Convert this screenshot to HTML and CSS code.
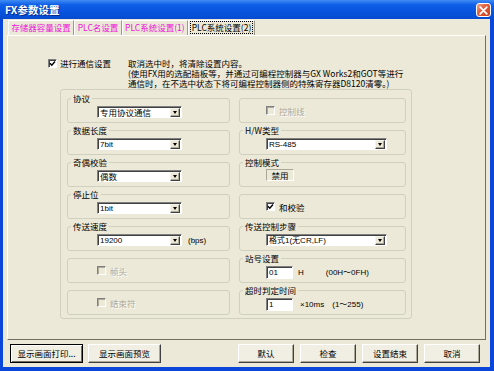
FILE: index.html
```html
<!DOCTYPE html>
<html lang="zh">
<head>
<meta charset="utf-8">
<title>FX参数设置</title>
<link rel="stylesheet" href="styles.css">
</head>
<body>
<div class="window">
  <div class="titlebar">
    <span class="title">FX参数设置</span>
    <span class="close"><svg width="9" height="9" viewBox="0 0 9 9"><path d="M1.2 1.2L7.8 7.8M7.8 1.2L1.2 7.8" stroke="#fff" stroke-width="1.7" stroke-linecap="round"/></svg></span>
  </div>
  <div class="frame">
    <div class="tabs">
      <div class="tab t1">存储器容量设置</div>
      <div class="tab t2">PLC名设置</div>
      <div class="tab t3">PLC系统设置(1)</div>
      <div class="tab t4 sel"><span class="focus">PLC系统设置(2)</span></div>
    </div>
    <div class="page">
      <div class="head">
        <div class="mainchk"><span class="cb"><svg viewBox="0 0 7 7"><path d="M1 3.3L2.8 5.2L6 1.5" fill="none" stroke="#000" stroke-width="1.4"/></svg></span><span>进行通信设置</span></div>
        <div class="desc"><div class="dl">取消选中时，将清除设置内容。</div><div class="dl">(使用FX用的选配插板等，并通过可编程控制器与GX Works2和GOT等进行</div><div class="dl">通信时，在不选中状态下将可编程控制器侧的特殊寄存器D8120清零。)</div></div>
      </div>
      <div class="group">
        <div class="grid">
          <div class="box"><span class="lbl">协议</span><div class="ctl"><div class="combo w85"><span class="cv cjk">专用协议通信</span><span class="arrow"></span></div></div></div>
          <div class="box plain r"><div class="ctl"><span class="cb dis"></span><span class="dtext">控制线</span></div></div>

          <div class="box"><span class="lbl">数据长度</span><div class="ctl"><div class="combo w85"><span class="cv">7bit</span><span class="arrow"></span></div></div></div>
          <div class="box r"><span class="lbl">H/W类型</span><div class="ctl"><div class="combo w121"><span class="cv">RS-485</span><span class="arrow"></span></div></div></div>

          <div class="box"><span class="lbl">奇偶校验</span><div class="ctl"><div class="combo w85"><span class="cv cjk">偶数</span><span class="arrow"></span></div></div></div>
          <div class="box r"><span class="lbl">控制模式</span><div class="ctl"><span class="static">禁用</span></div></div>

          <div class="box"><span class="lbl">停止位</span><div class="ctl"><div class="combo w85"><span class="cv">1bit</span><span class="arrow"></span></div></div></div>
          <div class="box plain r"><div class="ctl"><span class="cb"><svg viewBox="0 0 7 7"><path d="M1 3.3L2.8 5.2L6 1.5" fill="none" stroke="#000" stroke-width="1.4"/></svg></span><span>和校验</span></div></div>

          <div class="box"><span class="lbl">传送速度</span><div class="ctl"><div class="combo w85"><span class="cv">19200</span><span class="arrow"></span></div><span class="unit bps">(bps)</span></div></div>
          <div class="box r"><span class="lbl">传送控制步骤</span><div class="ctl"><div class="combo w121"><span class="cv">格式1(无CR,LF)</span><span class="arrow"></span></div></div></div>

          <div class="box plain"><div class="ctl"><span class="cb dis"></span><span class="dtext">帧头</span></div></div>
          <div class="box r"><span class="lbl">站号设置</span><div class="ctl"><span class="edit">01</span><span class="unit h">H</span><span class="unit range1">(00H～0FH)</span></div></div>

          <div class="box plain"><div class="ctl"><span class="cb dis"></span><span class="dtext">结束符</span></div></div>
          <div class="box r"><span class="lbl">超时判定时间</span><div class="ctl"><span class="edit">1</span><span class="unit ms">×10ms</span><span class="unit range2">(1～255)</span></div></div>
        </div>
      </div>
    </div>
    <div class="btns">
      <div class="btn wide focused">显示画面打印...</div>
      <div class="btn wide">显示画面预览</div>
      <div class="right">
        <div class="btn sm">默认</div>
        <div class="btn sm">检查</div>
        <div class="btn sm">设置结束</div>
        <div class="btn sm">取消</div>
      </div>
    </div>
  </div>
</div>
</body>
</html>
```
FILE: styles.css
```css
* { box-sizing: border-box; }
html, body { margin: 0; padding: 0; }
body {
  width: 494px;
  height: 371px;
  overflow: hidden;
  font-family: "Noto Sans CJK SC", "Liberation Sans", sans-serif;
  font-size: 8.5px;
  line-height: 10px;
  color: #000;
  background: #ECE9D8;
}
.window {
  width: 494px;
  height: 371px;
  display: flex;
  flex-direction: column;
}
.titlebar {
  height: 19px;
  flex: none;
  display: flex;
  align-items: center;
  justify-content: space-between;
  padding: 0 3px 0 5px;
  background: linear-gradient(#3F8CF3 0%, #0F5FE8 25%, #0854DE 60%, #064BD0 100%);
}
.title {
  color: #fff;
  font-weight: bold;
  font-size: 10.5px;
  text-shadow: 1px 1px 0 #0A2A8A;
}
.close {
  width: 15px;
  height: 14px;
  margin-top: 1px;
  border: 1px solid #fff;
  border-radius: 3px;
  background: linear-gradient(135deg, #F4A285 0%, #E05A38 45%, #C8401F 100%);
  display: flex;
  align-items: center;
  justify-content: center;
}
.frame {
  flex: 1;
  display: flex;
  flex-direction: column;
  border: solid #0A46DA;
  border-width: 0 4px 4px 3px;
  background: #ECE9D8;
}
.tabs {
  display: flex;
  height: 15px;
  margin: 1px 0 0 5px;
}
.tab {
  height: 15px;
  padding: 0 2px;
  border: 1px solid;
  border-color: #fff #9D9A8B transparent #fff;
  border-bottom: none;
  text-align: center;
  line-height: 12px;
  color: #EE14D8;
  white-space: nowrap;
}
.t1 { min-width: 66px; }
.t2 { min-width: 48px; }
.t3 { min-width: 63px; }
.t4 { min-width: 64px; }
.tab.sel { color: #000; }
.focus {
  display: inline-block;
  outline: 1px dotted #000;
  padding: 0 1px;
  line-height: 11px;
}
.page {
  margin-left: 4px;
  width: 479px;
  height: 305px;
  border: 1px solid;
  border-color: #fff #716F64 #716F64 #fff;
}
.head {
  display: flex;
  margin: 22px 0 0 40px;
}
.mainchk {
  width: 80px;
  height: 10px;
  display: flex;
  align-items: center;
  gap: 3px;
  white-space: nowrap;
}
.desc { white-space: nowrap; }
.dl { height: 10px; line-height: 10px; }
.cb {
  width: 9px;
  height: 9px;
  flex: none;
  background: #fff;
  border: 1px solid;
  border-color: #808080 #fff #fff #808080;
  box-shadow: inset 1px 1px 0 #404040;
  display: flex;
  align-items: center;
  justify-content: center;
}
.cb svg { width: 7px; height: 7px; }
.cb.dis {
  background: #ECE9D8;
  box-shadow: inset 1px 1px 0 #ACA899;
}
.dtext {
  color: #ACA899;
  text-shadow: 1px 1px 0 #fff;
}
.group {
  margin: 1px 0 0 52px;
  width: 352px;
  border: 1px solid #D0D0BF;
  border-radius: 3px;
  padding: 3px 5px 1px 6px;
}
.grid {
  display: grid;
  grid-template-columns: 163px 167px;
  column-gap: 9px;
  grid-auto-rows: 32px;
}
.box {
  margin-top: 5px;
  height: 25px;
  border: 1px solid #D0D0BF;
  border-radius: 3px;
  display: flex;
  flex-direction: column;
  align-items: flex-start;
}
.lbl {
  margin: -6px 0 0 3px;
  padding: 0 2px;
  height: 10px;
  line-height: 10px;
  background: #ECE9D8;
  white-space: nowrap;
}
.ctl {
  display: flex;
  align-items: center;
  margin: 3px 0 0 29px;
  white-space: nowrap;
}
.box.r .ctl { margin-left: 26px; }
.box.plain { justify-content: center; }
.box.plain .ctl { margin-top: 0; gap: 4px; }
.combo {
  height: 12px;
  background: #fff;
  border: 1px solid;
  border-color: #808080 #fff #fff #808080;
  box-shadow: inset 1px 1px 0 #404040;
  display: flex;
  align-items: center;
  justify-content: space-between;
  padding: 1px 1px 0 2px;
}
.w85 { width: 85px; }
.w121 { width: 121px; }
.cv {
  font-family: "Liberation Sans", "Noto Sans CJK SC", sans-serif;
  font-size: 8px;
  line-height: 9px;
}
.cv.cjk { font-size: 8.5px; font-family: "Noto Sans CJK SC", sans-serif; }
.arrow {
  width: 10px;
  height: 9px;
  background: #ECE9D8;
  border: 1px solid;
  border-color: #F4F3EE #404040 #404040 #F4F3EE;
  box-shadow: inset -1px -1px 0 #ACA899;
  display: flex;
  align-items: center;
  justify-content: center;
}
.arrow::after {
  content: "";
  border-left: 2.5px solid transparent;
  border-right: 2.5px solid transparent;
  border-top: 3px solid #000;
}
.unit {
  font-family: "Liberation Sans", "Noto Sans CJK SC", sans-serif;
  font-size: 8px;
  line-height: 9px;
}
.bps { margin-left: 6px; }
.static {
  width: 28px;
  height: 12px;
  margin-top: -1px;
  line-height: 10px;
  text-align: center;
  border: 1px solid;
  border-color: #ACA899 #fff #fff #ACA899;
}
.edit {
  width: 27px;
  height: 13px;
  background: #fff;
  border: 1px solid;
  border-color: #808080 #fff #fff #808080;
  box-shadow: inset 1px 1px 0 #404040;
  font-family: "Liberation Sans", sans-serif;
  font-size: 8px;
  line-height: 11px;
  padding-left: 2px;
}
.h { margin-left: 5px; }
.range1 { margin-left: 22px; }
.ms { margin-left: 7px; }
.range2 { margin-left: 8px; }
.btns {
  display: flex;
  gap: 5px;
  margin: 4px 0 0 7px;
  padding-right: 10px;
  height: 19px;
}
.right {
  margin-left: auto;
  display: flex;
  gap: 6px;
}
.btn {
  height: 19px;
  border: 1px solid;
  border-color: #fff #404040 #404040 #fff;
  box-shadow: inset -1px -1px 0 #ACA899;
  background: #F1EFE4;
  text-align: center;
  line-height: 17px;
  white-space: nowrap;
}
.btn.wide { width: 73px; }
.btn.sm { width: 56px; }
.btn.focused {
  border-color: #000;
  box-shadow: inset 1px 1px 0 #fff, inset -1px -1px 0 #716F64;
}
```
